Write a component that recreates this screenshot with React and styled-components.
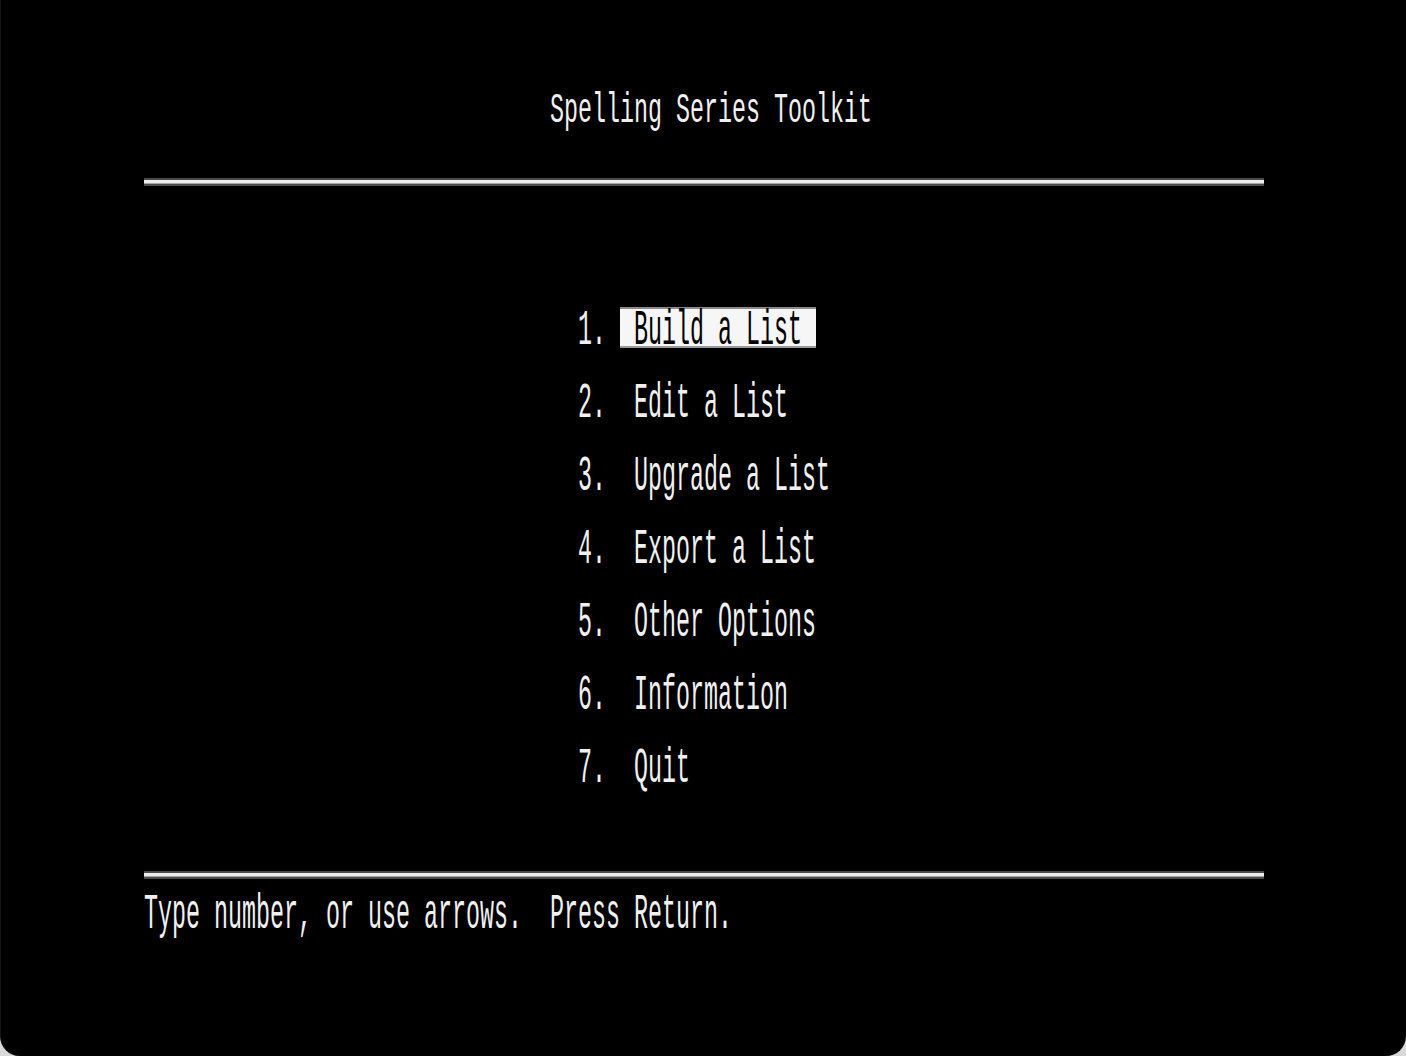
import React from 'react';
import styled, { createGlobalStyle } from 'styled-components';

const CELL_W = 14;
const CELL_H = 36.5;

const GlobalStyle = createGlobalStyle`
    html, body {
        margin: 0;
        padding: 0;
        background: #d9d9d9;
    }
    #root {
        width: 1406px;
        height: 1056px;
    }
`;

const Screen = styled.div`
    width: 1406px;
    height: 1056px;
    box-sizing: border-box;
    background: #000;
    border-bottom-left-radius: 20px;
    border-bottom-right-radius: 20px;
    border-left: 1px solid #141414;
    padding: 54px 0 0 143px;
    overflow: hidden;
`;

const TextGrid = styled.div`
    display: grid;
    grid-template-columns: repeat(80, ${CELL_W}px);
    grid-template-rows: repeat(24, ${CELL_H}px);
    font-family: 'Liberation Mono', 'DejaVu Sans Mono', monospace;
    font-size: 23.33px;
    color: #f0f0f0;
`;

const Cell = styled.div`
    grid-row: ${({ row }) => row + 1};
    grid-column: ${({ col, span }) => `${col + 1} / span ${span}`};
    display: flex;
    align-items: center;
    white-space: pre;
    overflow: visible;
`;

const Inverse = styled(Cell)`
    align-self: center;
    height: 41px;
    background: #f6f6f6;
    color: #000;
    box-shadow: inset 0 2px 0 #8a8a8a, inset 0 -2px 0 #9a9a9a;
`;

const Glyphs = styled.span`
    display: inline-block;
    line-height: 1;
    transform: ${({ short }) =>
        short ? 'translateY(3px) scaleY(1.85)' : 'translateY(5px) scaleY(2.15)'};
    transform-origin: center;
`;

const Rule = styled.div`
    grid-row: ${({ row }) => row + 1};
    grid-column: 1 / span 80;
    align-self: center;
    height: 8px;
    background: linear-gradient(
        to bottom,
        #4a4a4a 0,
        #4a4a4a 2px,
        #ececec 2px,
        #ececec 5px,
        #a6a6a6 5px,
        #a6a6a6 6px,
        #4a4a4a 6px,
        #4a4a4a 8px
    );
`;

const menu = [
    'Build a List',
    'Edit a List',
    'Upgrade a List',
    'Export a List',
    'Other Options',
    'Information',
    'Quit',
];

const Text = ({ row, col, children, short }) => (
    <Cell row={row} col={col} span={children.length}>
        <Glyphs short={short}>{children}</Glyphs>
    </Cell>
);

const MenuItem = ({ idx, label, selected }) => {
    const row = 7 + idx * 2;
    return (
        <>
            <Text row={row} col={31}>{`${idx + 1}.`}</Text>
            {selected ? (
                <Inverse row={row} col={34} span={label.length + 2}>
                    <Glyphs>{` ${label} `}</Glyphs>
                </Inverse>
            ) : (
                <Text row={row} col={35}>{label}</Text>
            )}
        </>
    );
};

export default function App() {
    return (
        <>
            <GlobalStyle />
            <Screen>
                <TextGrid>
                    <Text row={1} col={29} short>
                        Spelling Series Toolkit
                    </Text>
                    <Rule row={3} />

                    {menu.map((label, idx) => (
                        <MenuItem key={label} idx={idx} label={label} selected={idx === 0} />
                    ))}

                    <Rule row={22} />
                    <Text row={23} col={0}>
                        {'Type number, or use arrows.  Press Return.'}
                    </Text>
                </TextGrid>
            </Screen>
        </>
    );
}
